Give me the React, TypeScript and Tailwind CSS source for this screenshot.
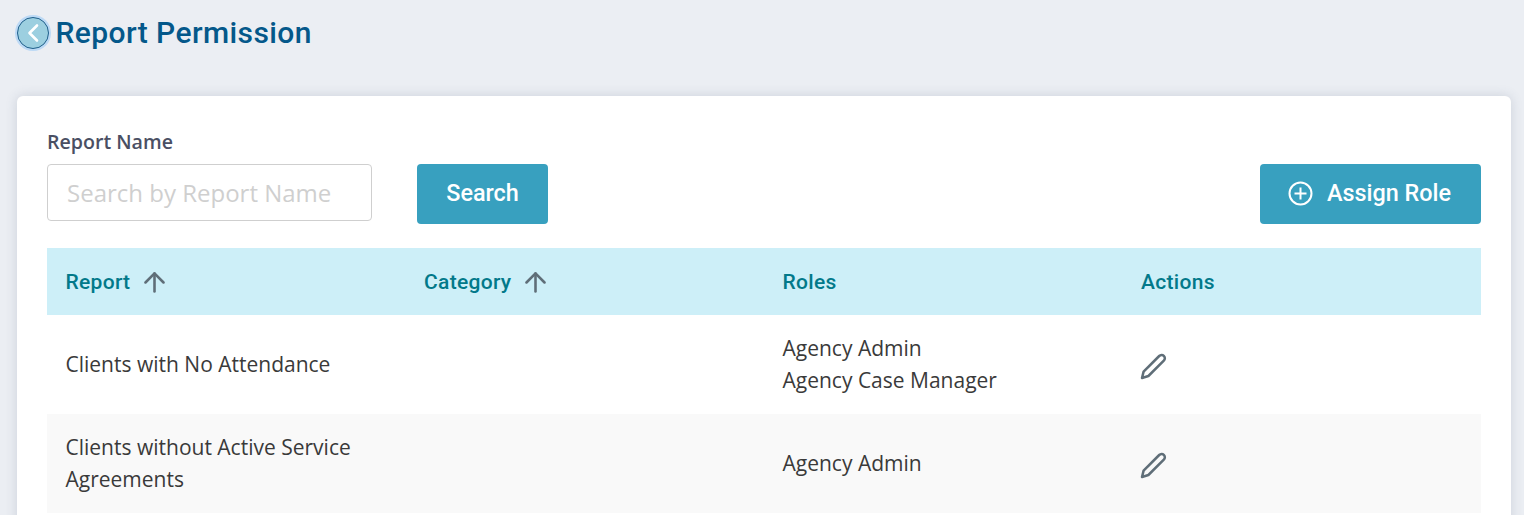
import { ArrowUp } from 'lucide-react';

const rows = [
  { report: ['Clients with No Attendance'], roles: ['Agency Admin', 'Agency Case Manager'] },
  { report: ['Clients without Active Service', 'Agreements'], roles: ['Agency Admin'] },
];

function EditIcon() {
  return (
    <svg width="28" height="28" viewBox="0 0 28 28" fill="none" stroke="#5f6e78" strokeWidth="2.5" strokeLinejoin="round" strokeLinecap="round">
      <path d="M2 26 L3.6 19.6 L19.2 4 C20.6 2.6 22.6 2.6 23.8 3.8 C25.2 5.2 25.2 7.2 23.8 8.6 L8.4 24 Z" />
    </svg>
  );
}

export default function App() {
  return (
    <div className="h-[515px] overflow-hidden bg-[#ebeef3] pl-[17px] pr-[13px] pt-[17px] font-['Open_Sans',sans-serif]">
      <div className="flex h-[32px] items-center">
        <button className="flex h-[32px] w-[32px] items-center justify-center rounded-full border border-[#1f5f8b] bg-[#9ccfe0] shadow-[0_0_0_2px_#bcd9f5]">
          <svg width="16" height="20" viewBox="0 0 16 20" fill="none" stroke="#ffffff" strokeWidth="2.6" strokeLinecap="round" strokeLinejoin="round">
            <path d="M12 2.5 L4.5 10 L12 17.5" />
          </svg>
        </button>
        <h1 className="ml-[6.5px] font-['Roboto',sans-serif] text-[30px] font-medium leading-[32px] tracking-[0.42px] text-[#04588a]">
          Report Permission
        </h1>
      </div>

      <div className="mt-[47px] h-[500px] rounded-[6px] bg-white px-[30px] pt-[33px] shadow-[0_0_12px_rgba(60,80,110,0.18)]">
        <label className="block text-[19.6px] font-semibold leading-[26px] text-[#4a4f63]">Report Name</label>
        <div className="mt-[9px] flex items-start">
          <input
            type="text"
            placeholder="Search by Report Name"
            className="h-[57px] w-[325px] rounded-[4px] border border-[#cfcfcf] bg-white px-[19px] pb-[1px] text-[24px] placeholder:text-[#cfcfcf]"
          />
          <button className="ml-[45px] h-[60px] w-[131px] rounded-[4px] bg-[#38a0bf] font-['Roboto',sans-serif] text-[23.4px] font-medium text-white">
            Search
          </button>
          <button className="ml-auto flex h-[60px] w-[221px] items-center justify-center gap-[14px] rounded-[4px] bg-[#38a0bf] pb-[1px] pr-[2px] font-['Roboto',sans-serif] text-[23.4px] font-medium text-white">
            <svg width="25" height="25" viewBox="0 0 25 25" fill="none" stroke="#ffffff" strokeWidth="2">
              <circle cx="12.5" cy="12.5" r="11" />
              <path d="M12.5 6.5 V18.5 M6.5 12.5 H18.5" />
            </svg>
            Assign Role
          </button>
        </div>

        <div className="mt-[24px]">
          <div className="grid h-[67px] grid-cols-4 items-center bg-[#cdeff8] pt-[2px] font-['Roboto',sans-serif] text-[21px] font-medium tracking-[0.3px] text-[#02798a]">
            <div className="flex items-center gap-[9px] pl-[18.5px]">
              Report
              <ArrowUp size={31} strokeWidth={2} color="#5f6e78" />
            </div>
            <div className="flex items-center gap-[9px] pl-[18.5px]">
              Category
              <ArrowUp size={31} strokeWidth={2} color="#5f6e78" />
            </div>
            <div className="pl-[18.5px]">Roles</div>
            <div className="pl-[18.5px]">Actions</div>
          </div>

          {rows.map((row, i) => (
            <div
              key={i}
              className={`grid h-[99px] grid-cols-4 items-center pb-[2px] text-[21px] leading-[32px] text-[#3a3a3a] ${i % 2 === 1 ? 'bg-[#f9f9f9]' : 'bg-white'}`}
            >
              <div className="pl-[18.5px]">
                {row.report.map((line) => (
                  <div key={line}>{line}</div>
                ))}
              </div>
              <div />
              <div className="pl-[18.5px]">
                {row.roles.map((role) => (
                  <div key={role}>{role}</div>
                ))}
              </div>
              <div className="pl-[17px] pt-[5px]">
                <EditIcon />
              </div>
            </div>
          ))}
        </div>
      </div>
    </div>
  );
}
